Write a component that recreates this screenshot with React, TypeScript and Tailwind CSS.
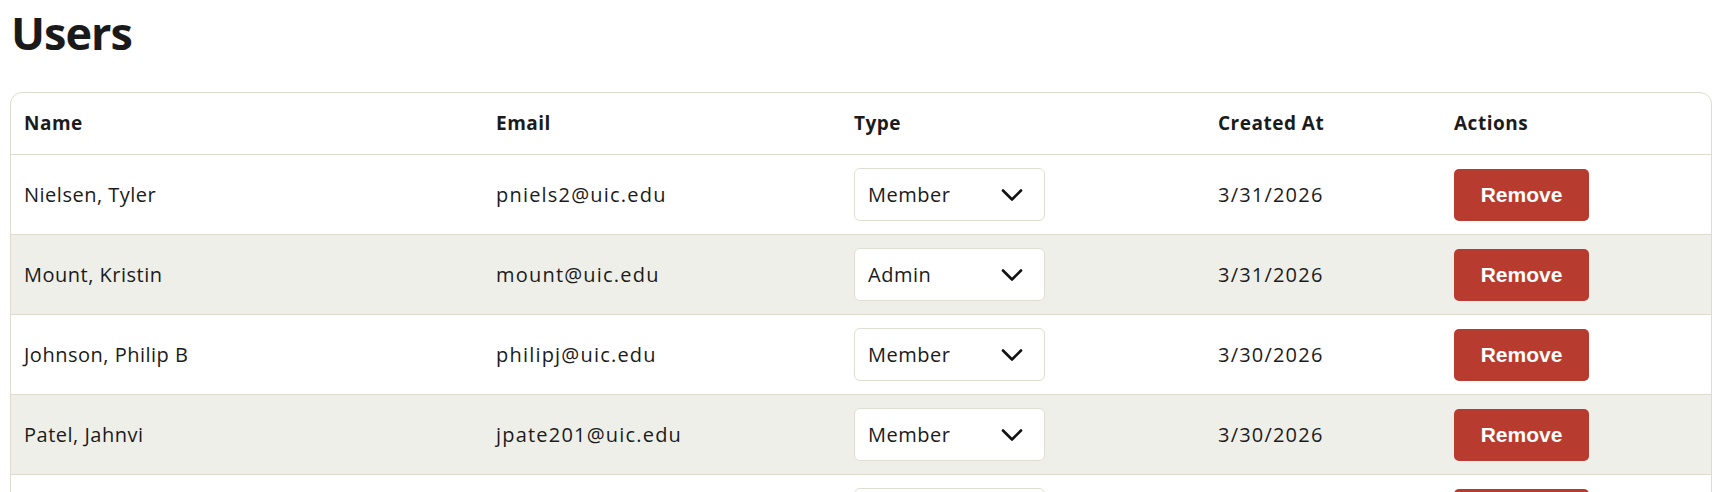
import React from "react";

const users = [
  { name: "Nielsen, Tyler", email: "pniels2@uic.edu", type: "Member", created: "3/31/2026" },
  { name: "Mount, Kristin", email: "mount@uic.edu", type: "Admin", created: "3/31/2026" },
  { name: "Johnson, Philip B", email: "philipj@uic.edu", type: "Member", created: "3/30/2026" },
  { name: "Patel, Jahnvi", email: "jpate201@uic.edu", type: "Member", created: "3/30/2026" },
  { name: "Garcia, Maria", email: "mgarcia@uic.edu", type: "Member", created: "3/29/2026" },
];

const cols = "grid grid-cols-[472px_358px_364px_236px_270px]";

function Chevron() {
  return (
    <svg width="22" height="14" viewBox="0 0 22 14" fill="none">
      <polyline points="2,2.5 11,11.5 20,2.5" stroke="#111" strokeWidth="2.6" strokeLinecap="round" strokeLinejoin="round" />
    </svg>
  );
}

export default function App() {
  return (
    <div className="bg-white pl-[10px] pr-[14px] text-[#1b1b1b]" style={{ fontFamily: "'Open Sans', 'Noto Sans', sans-serif" }}>
      <h1 className="pt-[2px] pl-[1px] text-[45px] font-bold leading-[62px] tracking-[-1px] text-[#1a1a1a]">Users</h1>
      <div className="mt-[28px] overflow-hidden rounded-t-[12px] border border-[#dedbd0]">
        <div className={`${cols} h-[62px] items-center border-b border-[#dedbd0] text-[19px] font-bold tracking-[0.5px]`}>
          <div className="pl-[13px]">Name</div>
          <div className="pl-[13px]">Email</div>
          <div className="pl-[13px]">Type</div>
          <div className="pl-[13px]">Created At</div>
          <div className="pl-[13px]">Actions</div>
        </div>
        {users.map((u, i) => (
          <div
            key={i}
            className={`${cols} h-[80px] items-center border-b border-[#dedbd0] text-[20px] ${i % 2 === 1 ? "bg-[#efefea]" : "bg-white"}`}
          >
            <div className="pl-[13px] tracking-[0.5px]">{u.name}</div>
            <div className="pl-[13px] tracking-[1.2px]">{u.email}</div>
            <div className="pl-[13px]">
              <div className="flex h-[53px] w-[191px] items-center justify-between rounded-[6px] border border-[#e0ddd2] bg-white pl-[13px] pr-[21px]">
                <span className="tracking-[0.5px]">{u.type}</span>
                <Chevron />
              </div>
            </div>
            <div className="pl-[13px] tracking-[1.2px]">{u.created}</div>
            <div className="pl-[13px]">
              <button
                className="flex h-[52px] w-[135px] items-center justify-center rounded-[5px] bg-[#b83b30] text-[21px] font-bold text-white"
                style={{ fontFamily: "'Liberation Sans', Arial, sans-serif" }}
              >
                Remove
              </button>
            </div>
          </div>
        ))}
      </div>
    </div>
  );
}
